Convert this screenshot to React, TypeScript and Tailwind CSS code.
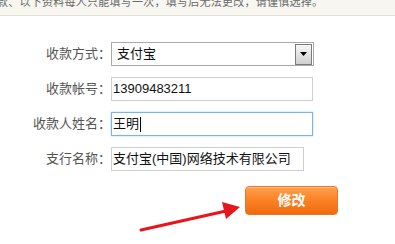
import React from 'react'

const FONT = '"Liberation Sans", "Noto Sans CJK SC", sans-serif'

function FieldRow (props: { label: string, children: React.ReactNode }) {
  const { label, children } = props
  return (
    <div className="flex h-[24px] items-center">
      <div className="w-[111px] shrink-0 text-right text-[13px] text-[#555]">{label}</div>
      {children}
    </div>
  )
}

function TextBox (props: { value: string, width: string, focused?: boolean }) {
  const { value, width, focused } = props
  return (
    <div
      className={
        'flex h-[24px] items-center pl-[1px] text-[13px] text-[#111] bg-white border ' + width + ' ' +
        (focused ? 'border-[#7eb3e6] shadow-[0_0_2px_#a9cff2]' : 'border-[#cfcfcf]')
      }
    >
      {value}
      {focused && <span className="ml-[1px] inline-block h-[15px] w-[1px] bg-black" />}
    </div>
  )
}

export default function App () {
  return (
    <div className="relative h-[244px] w-[395px] overflow-hidden bg-white" style={{ fontFamily: FONT }}>
      {/* notice strip, cut off at top */}
      <div className="h-[16px] overflow-hidden border-b border-[#e6e1d6] bg-[#f8f6f0]">
        <div className="-ml-[3px] -mt-[3px] whitespace-nowrap text-[11px] leading-[11px] tracking-[0.25px] text-[#6a6a6a]">
          款、以下资料每人只能填写一次，填写后无法更改，请谨慎选择。
        </div>
      </div>

      <div className="flex flex-col gap-[11px] pt-[26px]">
        <FieldRow label="收款方式：">
          <div className="flex h-[24px] w-[203px] items-center justify-between border border-[#a9a9a9] bg-white pl-[5px] pr-[1px] text-[13px] text-[#111]">
            <span>支付宝</span>
            <div className="flex h-[21px] w-[17px] items-center justify-center border border-[#7b7b7b] bg-gradient-to-b from-[#f7f7f7] to-[#cfcfcf]">
              <svg width="7" height="4" viewBox="0 0 7 4">
                <path d="M0 0 H7 L3.5 4 Z" fill="#000" />
              </svg>
            </div>
          </div>
        </FieldRow>
        <FieldRow label="收款帐号：">
          <TextBox value="13909483211" width="w-[202px]" />
        </FieldRow>
        <FieldRow label="收款人姓名：">
          <TextBox value="王明" width="w-[202px]" focused />
        </FieldRow>
        <FieldRow label="支行名称：">
          <TextBox value="支付宝(中国)网络技术有限公司" width="w-[193px]" />
        </FieldRow>
      </div>

      <div className="flex pl-[245px] pt-[15px]">
        <button className="flex h-[29px] w-[93px] items-center justify-center rounded-[4px] border border-[#e9772a] bg-gradient-to-b from-[#ffa04a] via-[#fb8124] to-[#f06a0c] text-[14px] font-bold text-white shadow-[inset_0_1px_0_#ffc08a]">
          修改
        </button>
      </div>

      {/* red annotation arrow */}
      <svg className="absolute left-0 top-0" width="395" height="244" viewBox="0 0 395 244">
        <line x1="141" y1="230" x2="226" y2="211" stroke="#e8161b" strokeWidth="3" strokeLinecap="round" />
        <path d="M240 207 L222 202 L226 219 Z" fill="#e8161b" />
      </svg>
    </div>
  )
}
